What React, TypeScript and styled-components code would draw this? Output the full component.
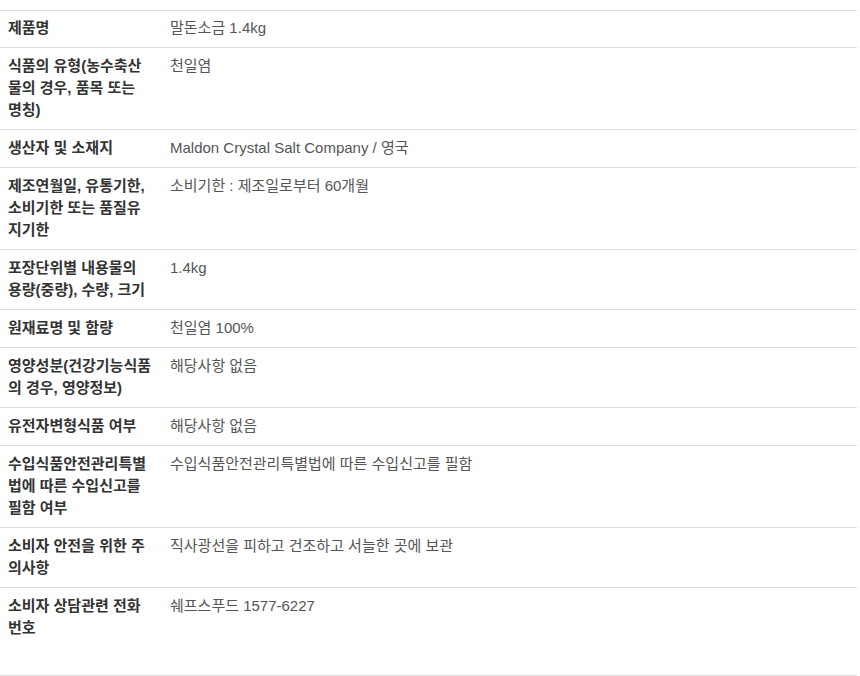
import styled, { createGlobalStyle } from 'styled-components';

const GlobalStyle = createGlobalStyle`
  body {
    margin: 0;
    background: #fff;
    font-family: "Liberation Sans", "Noto Sans CJK KR", sans-serif;
  }
`;

// \u2060 keeps "용량" together so the label wraps like the original
const infoRows = [
  { label: '제품명', value: '말돈소금 1.4kg' },
  { label: '식품의 유형(농수축산물의 경우, 품목 또는 명칭)', value: '천일염' },
  { label: '생산자 및 소재지', value: 'Maldon Crystal Salt Company / 영국' },
  { label: '제조연월일, 유통기한, 소비기한 또는 품질유지기한', value: '소비기한 : 제조일로부터 60개월' },
  { label: '포장단위별 내용물의 용\u2060량(중량), 수량, 크기', value: '1.4kg' },
  { label: '원재료명 및 함량', value: '천일염 100%' },
  { label: '영양성분(건강기능식품의 경우, 영양정보)', value: '해당사항 없음' },
  { label: '유전자변형식품 여부', value: '해당사항 없음' },
  { label: '수입식품안전관리특별법에 따른 수입신고를 필함 여부', value: '수입식품안전관리특별법에 따른 수입신고를 필함' },
  { label: '소비자 안전을 위한 주의사항', value: '직사광선을 피하고 건조하고 서늘한 곳에 보관' },
  { label: '소비자 상담관련 전화번호', value: '쉐프스푸드 1577-6227' },
];

const App = () => {
  return (
    <>
      <GlobalStyle />
      <Wrapper>
        <InfoTable>
          <colgroup>
            <col style={{ width: 162 }} />
            <col />
          </colgroup>
          <tbody>
            {infoRows.map((row, index) => (
              <Row key={index} $last={index === infoRows.length - 1}>
                <Label>{row.label}</Label>
                <Value>{row.value}</Value>
              </Row>
            ))}
          </tbody>
        </InfoTable>
      </Wrapper>
    </>
  );
}

const Wrapper = styled.div`
  padding-top: 10px;
  width: 857px;
`;

const InfoTable = styled.table`
  width: 100%;
  border-collapse: collapse;
  table-layout: fixed;
  border-bottom: 1px solid #dcdcdc;

  tr:first-child th,
  tr:first-child td {
    padding-top: 6px;
  }
`;

const Row = styled.tr<{ $last: boolean }>`
  border-top: 1px solid #dcdcdc;

  th, td {
    padding: 7px 8px ${({ $last }) => ($last ? '36px' : '8px')} 8px;
  }
`;

const Label = styled.th`
  text-align: left;
  vertical-align: top;
  font-size: 15px;
  line-height: 22px;
  font-weight: bold;
  color: #333;
  padding-right: 10px !important;
`;

const Value = styled.td`
  vertical-align: top;
  font-size: 15px;
  line-height: 22px;
  color: #555;
`;

export default App;
